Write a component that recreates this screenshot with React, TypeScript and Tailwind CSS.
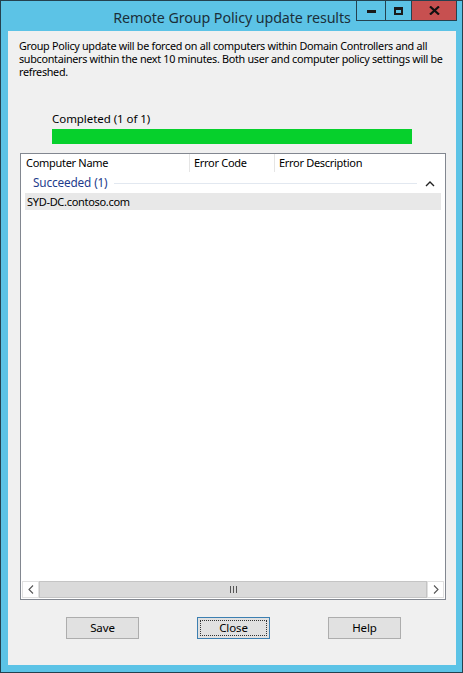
import React from "react";

const font = { fontFamily: '"Segoe UI", "Noto Sans", "Open Sans", sans-serif' };

function Btn({ label, focused }: { label: string; focused?: boolean }) {
  return (
    <div
      className={
        "w-[73px] h-[22px] flex items-center justify-center bg-[#e1e1e1] border text-[11.5px] tracking-[-0.1px] text-black " +
        (focused ? "border-[#3c7fb1]" : "border-[#adadad]")
      }
    >
      {focused ? (
        <div className="w-[67px] h-[16px] border border-dotted border-[#333] flex items-center justify-center">
          {label}
        </div>
      ) : (
        label
      )}
    </div>
  );
}

export default function App() {
  return (
    <div style={font} className="w-[463px] h-[673px] bg-[#5cc3e6] border border-[#24414f] flex flex-col pl-[7px] pr-[6px] pb-[7px] text-black">
      <div className="relative h-[30px] shrink-0 flex items-center justify-center">
        <span className="text-[14.3px] text-[#1b2f3a] mt-[3px] ml-[0px] tracking-[-0.1px]">Remote Group Policy update results</span>
        <div className="absolute top-[-1px] right-[-1px] flex h-[21px]">
          <div className="w-[29px] h-full border border-[#24414f] border-r-0 flex items-center justify-center">
            <div className="w-[9px] h-[3px] bg-[#1a1a1a] mt-[2px]" />
          </div>
          <div className="w-[26px] h-full border border-[#24414f] border-r-0 flex items-center justify-center">
            <div className="w-[9px] h-[8px] border-2 border-[#1a1a1a] border-t-[3px]" />
          </div>
          <div className="w-[46px] h-full bg-[#c75050] border border-[#24414f] flex items-center justify-center">
            <svg width="11" height="9" viewBox="0 0 11 9">
              <path d="M1 0.5 L10 8.5 M10 0.5 L1 8.5" stroke="#111" strokeWidth="2.2" />
            </svg>
          </div>
        </div>
      </div>
      <div className="flex-1 bg-[#f0f0f0] flex flex-col">
        <p className="mt-[8px] ml-[11px] mr-[8px] text-[10.8px] leading-[13px] tracking-[-0.3px]">
          Group Policy update will be forced on all computers within Domain Controllers and all subcontainers within the next 10 minutes. Both user and computer policy settings will be refreshed.
        </p>
        <div className="mt-[34px] ml-[44px] text-[11.5px] leading-[14px] h-[14px] tracking-[-0.05px]">Completed (1 of 1)</div>
        <div className="mt-[3px] ml-[44px] w-[360px] h-[15px] bg-[#06d02c]" />
        <div className="mt-[9px] ml-[12px] w-[426px] h-[447px] border border-[#828790] bg-white flex flex-col">
          <div className="flex h-[18px] shrink-0 text-[11px] leading-[18px] tracking-[-0.3px]">
            <div className="w-[169px] pl-[5px] border-r border-[#e5e5e5]">Computer Name</div>
            <div className="w-[85px] pl-[4px] border-r border-[#e5e5e5]">Error Code</div>
            <div className="flex-1 pl-[4px]">Error Description</div>
          </div>
          <div className="flex items-center h-[18px] mt-[2px] pl-[12px] pr-[8px]">
            <span className="text-[11.8px] text-[#1e3c8c] tracking-[-0.15px]">Succeeded (1)</span>
            <div className="flex-1 h-px bg-[#e2e8f0] ml-[6px] mr-[8px]" />
            <svg width="10" height="7" viewBox="0 0 10 7" className="mr-[2px]">
              <path d="M1 6 L5 2 L9 6" stroke="#222" strokeWidth="1.4" fill="none" />
            </svg>
          </div>
          <div className="mt-[1px] mx-[4px] h-[17px] bg-[#e8e8e8] pl-[2px] text-[11px] leading-[17px] tracking-[-0.3px]">SYD-DC.contoso.com</div>
          <div className="flex-1" />
          <div className="h-[17px] mb-[1px] flex mx-px">
            <div className="w-[17px] h-full border border-[#e0e0e0] flex items-center justify-center">
              <svg width="6" height="9" viewBox="0 0 6 9">
                <path d="M5 0.5 L1 4.5 L5 8.5" stroke="#555" strokeWidth="1.1" fill="none" />
              </svg>
            </div>
            <div className="flex-1 h-full bg-[#dadada] border border-[#c4c4c4] flex items-center justify-center">
              <div className="flex gap-[2px]">
                <div className="w-px h-[7px] bg-[#555]" />
                <div className="w-px h-[7px] bg-[#555]" />
                <div className="w-px h-[7px] bg-[#555]" />
              </div>
            </div>
            <div className="w-[17px] h-full border border-[#e0e0e0] flex items-center justify-center">
              <svg width="6" height="9" viewBox="0 0 6 9">
                <path d="M1 0.5 L5 4.5 L1 8.5" stroke="#555" strokeWidth="1.1" fill="none" />
              </svg>
            </div>
          </div>
        </div>
        <div className="mt-[17px] flex pl-[58px] gap-[58px]">
          <Btn label="Save" />
          <Btn label="Close" focused />
          <Btn label="Help" />
        </div>
      </div>
    </div>
  );
}
